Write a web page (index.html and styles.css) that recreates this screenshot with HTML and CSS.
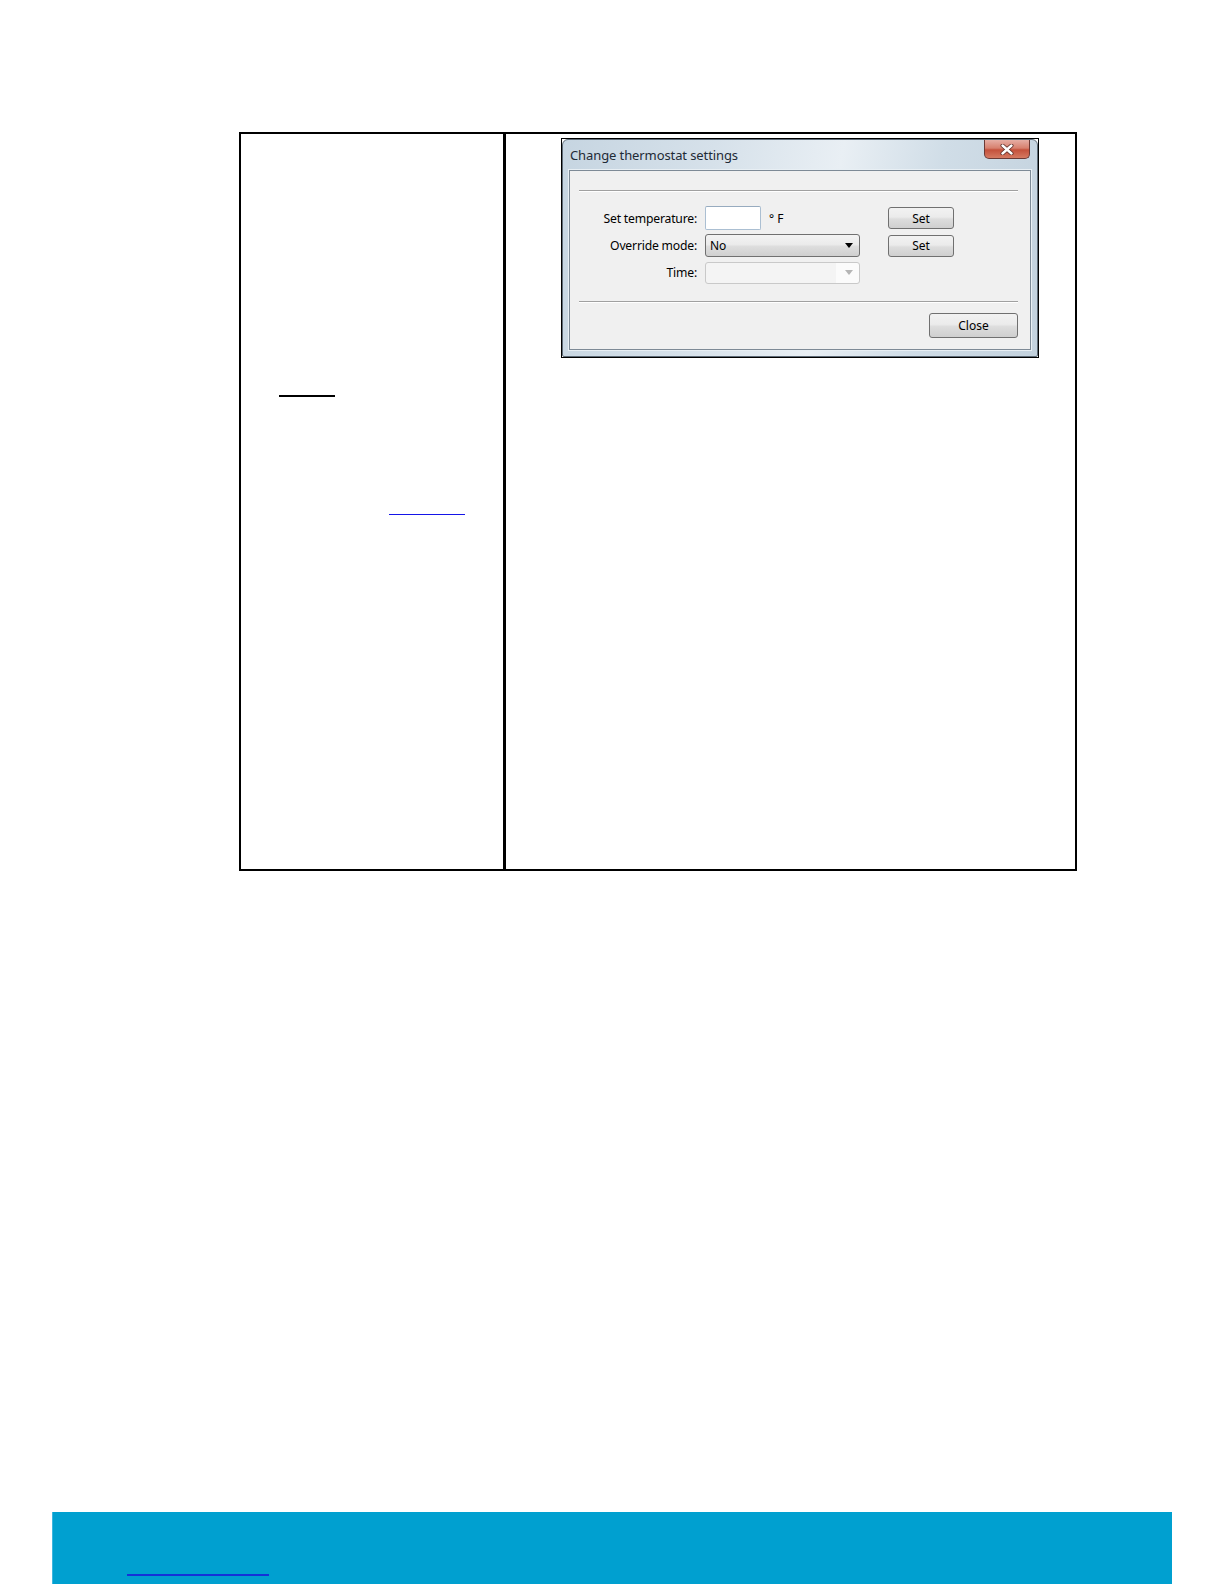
FILE: index.html
```html
<!DOCTYPE html>
<html>
<head>
<meta charset="utf-8">
<title>Change thermostat settings</title>
<link rel="stylesheet" href="styles.css">
</head>
<body>
<div class="page">
  <div class="table">
    <div class="cell cell-left">
      <span class="u-black"></span>
      <span class="u-link"></span>
    </div>
    <div class="cell cell-right">
      <div class="shot">
        <div class="window">
          <div class="titlebar">
            <span class="title">Change thermostat settings</span>
            <span class="close-btn">
              <svg width="14" height="11" viewBox="0 0 14 11"><path d="M2.5 1.5 L11.5 9.5 M11.5 1.5 L2.5 9.5" stroke="#5a2a24" stroke-width="4" stroke-linecap="round"/><path d="M2.5 1.5 L11.5 9.5 M11.5 1.5 L2.5 9.5" stroke="#fff" stroke-width="2.4" stroke-linecap="round"/></svg>
            </span>
          </div>
          <div class="client">
            <div class="sep"></div>
            <div class="form">
              <div class="label">Set temperature:</div>
              <div class="ctrl"><span class="textbox"></span><span class="unit">° F</span></div>
              <div class="btn btn-set">Set</div>

              <div class="label">Override mode:</div>
              <div class="ctrl"><span class="combo"><span class="combo-text">No</span><span class="arrow"></span></span></div>
              <div class="btn btn-set">Set</div>

              <div class="label">Time:</div>
              <div class="ctrl"><span class="combo combo-disabled"><span class="combo-text"></span><span class="arrow arrow-disabled"></span></span></div>
              <div></div>
            </div>
            <div class="sep sep-bottom"></div>
            <div class="actions"><div class="btn btn-close">Close</div></div>
          </div>
        </div>
      </div>
    </div>
  </div>
  <footer class="footer"><span class="footer-link"></span></footer>
</div>
</body>
</html>
```

FILE: styles.css
```css
* { box-sizing: border-box; }
html, body { margin: 0; padding: 0; background: #fff; }
body { font-family: "Noto Sans", "DejaVu Sans", sans-serif; }
.page {
  width: 1224px;
  height: 1584px;
  overflow: hidden;
  padding-top: 132px;
}
.table {
  margin-left: 239px;
  width: 838px;
  height: 739px;
  border: 2px solid #000;
  display: grid;
  grid-template-columns: 265px 1fr;
}
.cell-left {
  border-right: 3px solid #000;
  display: flex;
  flex-direction: column;
  align-items: flex-start;
}
.u-black {
  display: block;
  margin-top: 261px;
  margin-left: 38px;
  width: 56px;
  height: 2px;
  background: #000;
}
.u-link {
  display: block;
  margin-top: 117px;
  margin-left: 148px;
  width: 76px;
  height: 1px;
  background: #1515e8;
}
.cell-right {
  padding-top: 4px;
  padding-left: 55px;
}
.shot {
  width: 478px;
  height: 220px;
  border: 1px solid #000;
  background: #fff;
}
.window {
  width: 100%;
  height: 100%;
  border: 1px solid #5e6b77;
  border-radius: 6px 6px 2px 2px;
  background: linear-gradient(100deg, #c6d5e1 0%, #d6e1ea 30%, #e9eff4 55%, #d0dde7 75%, #c3d2de 100%);
  padding: 0 6px 6px 6px;
  display: flex;
  flex-direction: column;
}
.titlebar {
  height: 30px;
  display: flex;
  align-items: flex-start;
  justify-content: space-between;
  flex: none;
}
.title {
  font-size: 13px;
  color: #1e2a36;
  padding-left: 1px;
  padding-top: 6px;
  letter-spacing: -0.1px;
}
.close-btn {
  width: 46px;
  height: 19px;
  margin-right: 1px;
  border: 1px solid #6b3a36;
  border-top: none;
  border-radius: 0 0 5px 5px;
  background: linear-gradient(180deg, #e6aea4 0%, #d7806e 45%, #c4513c 55%, #d57a62 100%);
  display: flex;
  align-items: center;
  justify-content: center;
}
.client {
  flex: 1;
  background: #f0f0f0;
  border: 1px solid #7d8a96;
  box-shadow: 0 0 0 1px #e8eff4;
  padding: 19px 12px 0 9px;
  display: flex;
  flex-direction: column;
}
.sep {
  height: 2px;
  border-top: 1px solid #a0a0a0;
  border-bottom: 1px solid #fff;
  flex: none;
}
.form {
  margin-top: 14px;
  margin-left: -9px;
  display: grid;
  grid-template-columns: 127px 155px 86px;
  column-gap: 8px;
  grid-template-rows: 24px 23px 23px;
  row-gap: 4px;
  align-items: center;
  font-size: 12px;
  color: #000;
}
.form .btn-set {
  margin-left: 20px;
  width: 66px;
  justify-self: start;
}
.label {
  text-align: right;
  font-size: 12.2px;
  letter-spacing: -0.2px;
  color: #000;
}
.ctrl {
  display: flex;
  align-items: center;
  height: 100%;
}
.textbox {
  width: 56px;
  height: 24px;
  background: #fff;
  border: 1px solid #abbfd2;
  border-top-color: #97abbf;
  border-radius: 2px;
}
.unit {
  margin-left: 8px;
  font-size: 12px;
}
.combo {
  width: 155px;
  height: 23px;
  border: 1px solid #707070;
  border-radius: 3px;
  background: linear-gradient(180deg, #f3f3f3 0%, #ebebeb 45%, #dddddd 55%, #cfcfcf 100%);
  display: flex;
  align-items: center;
  justify-content: space-between;
  padding: 0 6px 0 4px;
}
.combo-text { font-size: 12px; }
.arrow {
  width: 0;
  height: 0;
  border-left: 4px solid transparent;
  border-right: 4px solid transparent;
  border-top: 5px solid #000;
}
.combo-disabled {
  height: 22px;
  background: linear-gradient(90deg, #f4f4f4 0%, #f4f4f4 85%, #fbfbfb 85%, #fbfbfb 100%);
  border-color: #c9c9c9;
}
.arrow-disabled { border-top-color: #b5b5b5; }
.btn {
  height: 22px;
  border: 1px solid #707070;
  border-radius: 3px;
  background: linear-gradient(180deg, #f2f2f2 0%, #ebebeb 45%, #dddddd 55%, #cfcfcf 100%);
  display: flex;
  align-items: center;
  justify-content: center;
  font-size: 12px;
  color: #000;
}
.sep-bottom { margin-top: 17px; }
.actions {
  display: flex;
  justify-content: flex-end;
  margin-top: 10px;
}
.btn-close {
  width: 89px;
  height: 25px;
}
.footer {
  margin-top: 641px;
  margin-left: 52px;
  width: 1120px;
  height: 72px;
  background: #00a0d0;
  border-left: 1px solid #3cb6de;
  display: flex;
  align-items: flex-end;
  padding-bottom: 8px;
}
.footer-link {
  display: block;
  margin-left: 74px;
  width: 142px;
  height: 2px;
  background: #1433d8;
}
```
